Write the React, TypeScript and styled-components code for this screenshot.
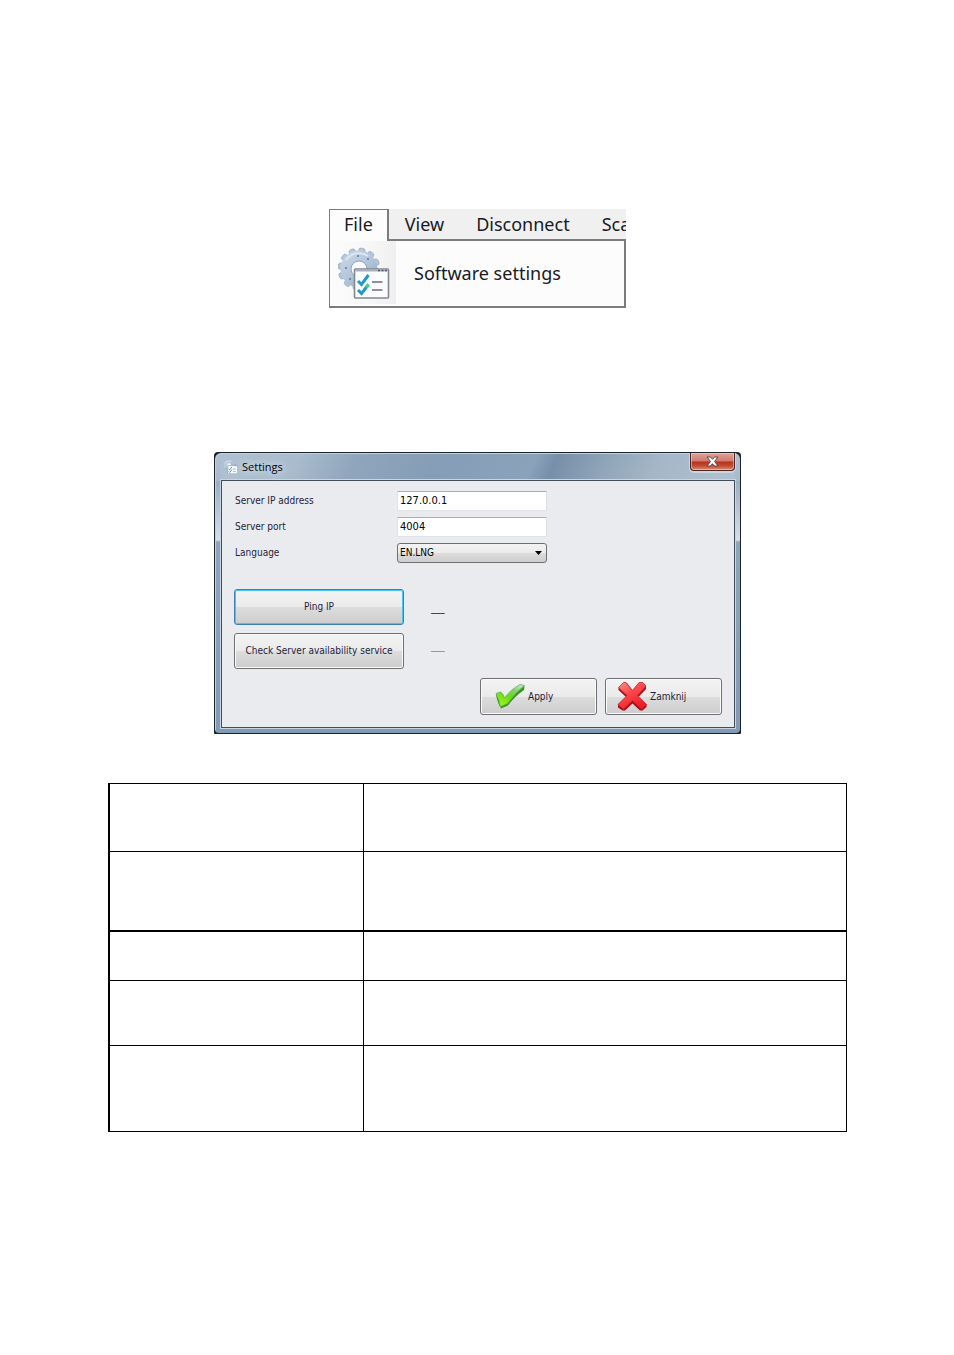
import React from 'react';
import styled, { createGlobalStyle } from 'styled-components';

const GlobalStyle = createGlobalStyle`
  *, *::before, *::after { box-sizing: border-box; }
  body { margin: 0; background: #fff; }
`;

const uiFont = '"DejaVu Sans Condensed", "DejaVu Sans", sans-serif';
const titleFont = '"Open Sans", "Noto Sans", sans-serif';
const menuFont = '"Noto Sans", "Open Sans", sans-serif';

const Page = styled.main`
  min-height: 100vh;
  padding: 209px 107px 48px 108px;
  display: flex;
  flex-direction: column;
  align-items: center;
`;

/* ---------- File menu ---------- */

const MenuWindow = styled.nav`
  width: 100%;
  max-width: 297px;
  margin-bottom: 144px;
  overflow: hidden;
  font-family: ${menuFont};
  color: #1a1a22;
`;

const MenuBar = styled.div`
  display: flex;
  height: 32px;
  background: #f0f0f0;
`;

const MenuTab = styled.button<{ $open?: boolean }>`
  flex: none;
  height: 32px;
  padding: ${p => (p.$open ? '0 14px 3px' : '0 16px')};
  border: 0 solid #7c7c7c;
  border-width: ${p => (p.$open ? '1px 2px 0 1px' : '0 0 2px')};
  background: ${p => (p.$open ? '#fcfcfc' : 'transparent')};
  font: 18px/28px ${menuFont};
  color: inherit;
`;

const MenuList = styled.div`
  border: solid #7c7c7c;
  border-width: 0 2px 2px 1px;
  background: #fcfcfc;
`;

const MenuItem = styled.button`
  display: flex;
  align-items: center;
  width: 100%;
  height: 65px;
  padding: 0 0 2px;
  border: 0;
  background: transparent;
  font: 18px/28px ${menuFont};
  color: inherit;
  text-align: left;
`;

const IconGutter = styled.span`
  display: flex;
  align-items: center;
  width: 66px;
  height: 63px;
  margin-right: 18px;
  padding-left: 8px;
  background: linear-gradient(90deg, #fcfcfc, #f7f7f7 60%, #efefef);
`;

/* ---------- Settings dialog ---------- */

const DialogEdge = styled.section`
  width: 100%;
  max-width: 527px;
  margin-bottom: 49px;
  padding: 1px;
  border-radius: 4px 4px 1px 1px;
  background: #1c222a;
  font: 10px/14px ${uiFont};
  color: #1e1e3a;
`;

const DialogFrame = styled.div`
  padding: 0 5px 5px 6px;
  border-radius: 6px 6px 4px 4px;
  box-shadow: inset 1px 1px 0 #c3d1de;
  background:
    linear-gradient(180deg, transparent 0, #a6b8c9 40px, #d5dfe8 87px, #8ea5bc 89px, #829ab4 100%) left / 6px 100% no-repeat,
    linear-gradient(180deg, transparent 0, #a6b8c9 40px, #d5dfe8 87px, #8ea5bc 89px, #829ab4 100%) right / 5px 100% no-repeat,
    linear-gradient(0deg, #829ab4 5px, transparent 5px),
    linear-gradient(115deg, #b0c2d1 0, #a9bccd 16%, #8fa5bc 27%, #869db7 42%, #8ba2bb 60%, #778fa9 64%, #91a6ba 74%, #a6b8c8 84%, #b0c2d0 100%) top / 100% 28px no-repeat,
    #829ab4;
`;

const TitleBar = styled.header`
  display: flex;
  height: 27px;
  padding-left: 2px;
  justify-content: space-between;
  align-items: flex-start;
`;

const Title = styled.h1`
  display: flex;
  align-items: center;
  gap: 4px;
  margin: 0;
  height: 27px;
  font: 11px/14px ${titleFont};
  color: #000;
  text-shadow: 0 0 6px #dfe8f0, 0 0 10px #dfe8f0;
`;

const CloseButton = styled.button`
  display: flex;
  align-items: center;
  justify-content: center;
  width: 45px;
  height: 18px;
  padding: 0;
  border: 1px solid #4c2326;
  border-top: 0;
  border-radius: 0 0 4px 4px;
  background: linear-gradient(180deg, #e0a296 0, #cf7a6c 48%, #b5321f 52%, #c04a30 75%, #d99073 100%);
  box-shadow: inset 0 0 0 1px rgba(255, 220, 210, 0.5), 0 1px 0 1px #c9d5df;
`;

const Client = styled.form`
  padding: 10px 12px 12px;
  border: 1px solid #434d5a;
  box-shadow: 0 0 0 1px #c9d5e0;
  background: #eaebef;
`;

const Fields = styled.div`
  display: grid;
  grid-template-columns: 163px minmax(0, 150px);
  row-gap: 6px;
  align-items: center;
  margin-bottom: 26px;
`;

const FieldLabel = styled.label`
  padding-left: 1px;
`;

const TextField = styled.input`
  width: 100%;
  height: 20px;
  padding: 0 2px 2px;
  border: 1px solid #e2e3ea;
  border-top-color: #abadb3;
  border-right-color: #dbdfe6;
  border-radius: 1px;
  background: #fff;
  font: 11px/14px ${uiFont};
  color: #000;
`;

const SelectWrap = styled.div`
  display: grid;
  align-items: center;
  > * { grid-area: 1 / 1; }
  > svg { justify-self: end; margin-right: 5px; pointer-events: none; }
`;

const face = 'linear-gradient(180deg, #f3f3f3 0, #ebebeb 50%, #dddddd 50%, #cdcdcd 100%)';

const Select = styled.select`
  appearance: none;
  width: 100%;
  height: 20px;
  padding: 0 2px;
  border: 1px solid #707070;
  border-radius: 3px;
  background: ${face};
  font: 10px/14px ${uiFont};
  color: #000;
`;

const PushButton = styled.button<{ $focused?: boolean }>`
  display: flex;
  align-items: center;
  justify-content: center;
  height: 36px;
  padding: 0;
  border: 1px solid ${p => (p.$focused ? '#3c7fb1' : '#707070')};
  border-radius: 3px;
  background: ${face};
  box-shadow: inset 0 0 0 1px ${p => (p.$focused ? '#48c6ee' : '#fbfbfb')};
  font: 10px/14px ${uiFont};
  color: #1e1e3a;
`;

const Checks = styled.div`
  display: flex;
  gap: 27px;
  margin-bottom: 9px;
`;

const CheckButtons = styled.div`
  display: grid;
  grid-template-columns: 170px;
  gap: 8px;
`;

const Statuses = styled.div`
  display: flex;
  flex-direction: column;
  gap: 24px;
  padding-top: 12px;
`;

const Status = styled.output<{ $dim?: boolean }>`
  color: ${p => (p.$dim ? '#7878e0' : '#0000b8')};
`;

const Actions = styled.div`
  display: flex;
  justify-content: flex-end;
  gap: 8px;
`;

const ActionButton = styled(PushButton)`
  width: 117px;
  height: 37px;
  padding-left: 11px;
  justify-content: flex-start;
  gap: 2px;
`;

/* ---------- Description table ---------- */

const Table = styled.table`
  width: 100%;
  table-layout: fixed;
  border-collapse: separate;
  border-spacing: 0;
  border: solid #000;
  border-width: 1px 0 0 2px;
`;

const Row = styled.tr<{ $height: number; $thick?: boolean }>`
  height: ${p => p.$height}px;
  > td {
    padding: 0;
    border: solid #000;
    border-width: 0 1px ${p => (p.$thick ? 2 : 1)}px 0;
  }
`;

const NameColumn = styled.col`
  width: 254px;
`;

const rows = [
  { height: 68 },
  { height: 80, thick: true },
  { height: 49 },
  { height: 65 },
  { height: 86 },
];

/* ---------- Drawings ---------- */

const teeth = Array.from({ length: 12 }, (_, i) => i * 30 + 8);

function SettingsIcon({ size, id }: { size: number; id: string }) {
  return (
    <svg width={size} height={size} viewBox="0 0 52 52" aria-hidden="true">
      <defs>
        <linearGradient id={id} gradientUnits="userSpaceOnUse" x1="4" y1="2" x2="36" y2="42">
          <stop offset="0" stopColor="#cddbe9" />
          <stop offset="0.5" stopColor="#b3c6db" />
          <stop offset="1" stopColor="#8ba5c2" />
        </linearGradient>
      </defs>
      <g fill="#b3c5d8" stroke="#9aaec3" strokeWidth="0.8">
        {teeth.map(a => (
          <rect key={a} x="18" y="1" width="6.500" height="8" rx="2.500" transform={`rotate(${a} 21 22)`} />
        ))}
      </g>
      <circle cx="21" cy="22" r="13" fill="none" stroke={`url(#${id})`} strokeWidth="11" />
      <circle cx="21" cy="22" r="8" fill="#f7f9fb" stroke="#8ea3b9" strokeWidth="1" />
      <path d="M8 13 A16 16 0 0 1 30 9" fill="none" stroke="#dce7f1" strokeWidth="2" />
      <g fill="#62788f">
        <circle cx="20" cy="9" r="1" />
        <circle cx="30" cy="12" r="1" />
        <circle cx="8" cy="21" r="1" />
        <circle cx="12" cy="32" r="1" />
      </g>
      <rect x="16.500" y="22" width="34" height="29" rx="1" fill="#fbfcfd" stroke="#84878f" strokeWidth="1.6" />
      <path d="M17.500 23.500H49.500" stroke="#a9b0ba" strokeWidth="2" />
      <path d="M40 23.500h2M43.500 23.500h2M47 23.500h2" stroke="#4d5a70" strokeWidth="1.5" />
      <path d="M34 35H44.500M34 43H44.500" stroke="#706a8c" strokeWidth="1.7" />
      <path d="M20 34L23.500 37.500L30.500 28" fill="none" stroke="#2497c4" strokeWidth="3" />
      <path d="M20 43L23.500 46.500L30.500 37.500" fill="none" stroke="#2497c4" strokeWidth="3" />
      <path d="M28 40.500L30.500 37.500" stroke="#48d468" strokeWidth="3" />
    </svg>
  );
}

function CheckIcon() {
  return (
    <svg width="34" height="30" viewBox="0 0 34 30" aria-hidden="true">
      <defs>
        <linearGradient id="tick" x1="1" y1="0" x2="0.2" y2="1">
          <stop offset="0" stopColor="#d8e8e0" />
          <stop offset="0.35" stopColor="#7fcf6c" />
          <stop offset="0.6" stopColor="#6bdc12" />
          <stop offset="1" stopColor="#9df71c" />
        </linearGradient>
      </defs>
      <path d="M4 13L9 11Q11 13 13 17Q19 9 28 4L32.500 4L32 8Q22 15 16 23.500L9 26.500Q6 22 4 13Z" fill="#35961a" />
      <path d="M4 11.500L8.500 10Q11 11 12.500 16Q18 8 28 2.500L32.500 3.500Q23 11 15.500 21.500L8.500 24.500Q7 17 4 11.500Z" fill="url(#tick)" stroke="#6cae5e" strokeWidth="0.8" />
    </svg>
  );
}

function CrossIcon() {
  return (
    <svg width="31" height="31" viewBox="0 0 31 31" aria-hidden="true">
      <defs>
        <linearGradient id="cross" x1="0" y1="0" x2="0.6" y2="1">
          <stop offset="0" stopColor="#ff8f8f" />
          <stop offset="0.45" stopColor="#fb4a4c" />
          <stop offset="1" stopColor="#ee1c24" />
        </linearGradient>
      </defs>
      <path d="M1.500 6.500L6.500 1.500L10 2L15.500 9.500L22 2L25.500 1.500L29 5V8L21.500 16L29.500 23.500V26L25.500 29.500H23L15.500 22.500L8 29.500H5.500L1 26.500V23.500L9 16L1.500 9Z" fill="#a90d16" />
      <path d="M1.500 6.500L6.500 1.500L9 1.500L15.500 9.500L22 1.500H25.500L29 5L20.500 14.500L29.500 23.500L24.500 28L15.500 19.500L6.500 28L1 23.500L10 14.500Z" fill="url(#cross)" stroke="#cf2a32" strokeWidth="0.8" />
    </svg>
  );
}

function CloseGlyph() {
  return (
    <svg width="13" height="11" viewBox="0 0 13 11" aria-hidden="true">
      <path d="M1 1H4.500L6.500 3.300L8.500 1H12L8.500 5.500L12 10H8.500L6.500 7.700L4.500 10H1L4.500 5.500Z" fill="#fff" stroke="#4f4b5e" strokeWidth="1" />
    </svg>
  );
}

export default function App() {
  return (
    <>
      <GlobalStyle />
      <Page>
        <MenuWindow>
          <MenuBar>
            <MenuTab type="button" $open>File</MenuTab>
            <MenuTab type="button">View</MenuTab>
            <MenuTab type="button">Disconnect</MenuTab>
            <MenuTab type="button">Sca</MenuTab>
          </MenuBar>
          <MenuList>
            <MenuItem type="button">
              <IconGutter><SettingsIcon size={52} id="gearLarge" /></IconGutter>
              Software settings
            </MenuItem>
          </MenuList>
        </MenuWindow>

        <DialogEdge>
          <DialogFrame>
            <TitleBar>
              <Title><SettingsIcon size={15} id="gearSmall" />Settings</Title>
              <CloseButton type="button" aria-label="Close"><CloseGlyph /></CloseButton>
            </TitleBar>
            <Client onSubmit={e => e.preventDefault()}>
              <Fields>
                <FieldLabel htmlFor="ip">Server IP address</FieldLabel>
                <TextField id="ip" defaultValue="127.0.0.1" />
                <FieldLabel htmlFor="port">Server port</FieldLabel>
                <TextField id="port" defaultValue="4004" />
                <FieldLabel htmlFor="language">Language</FieldLabel>
                <SelectWrap>
                  <Select id="language" defaultValue="EN.LNG">
                    <option>EN.LNG</option>
                  </Select>
                  <svg width="7" height="4" viewBox="0 0 7 4" aria-hidden="true">
                    <path d="M0 0H7L3.500 4Z" fill="#000" />
                  </svg>
                </SelectWrap>
              </Fields>
              <Checks>
                <CheckButtons>
                  <PushButton type="button" $focused>Ping IP</PushButton>
                  <PushButton type="button">Check Server availability service</PushButton>
                </CheckButtons>
                <Statuses>
                  <Status>___</Status>
                  <Status $dim>___</Status>
                </Statuses>
              </Checks>
              <Actions>
                <ActionButton type="submit"><CheckIcon />Apply</ActionButton>
                <ActionButton type="button"><CrossIcon />Zamknij</ActionButton>
              </Actions>
            </Client>
          </DialogFrame>
        </DialogEdge>

        <Table>
          <colgroup>
            <NameColumn />
            <col />
          </colgroup>
          <tbody>
            {rows.map((row, i) => (
              <Row key={i} $height={row.height} $thick={row.thick}>
                <td />
                <td />
              </Row>
            ))}
          </tbody>
        </Table>
      </Page>
    </>
  );
}
